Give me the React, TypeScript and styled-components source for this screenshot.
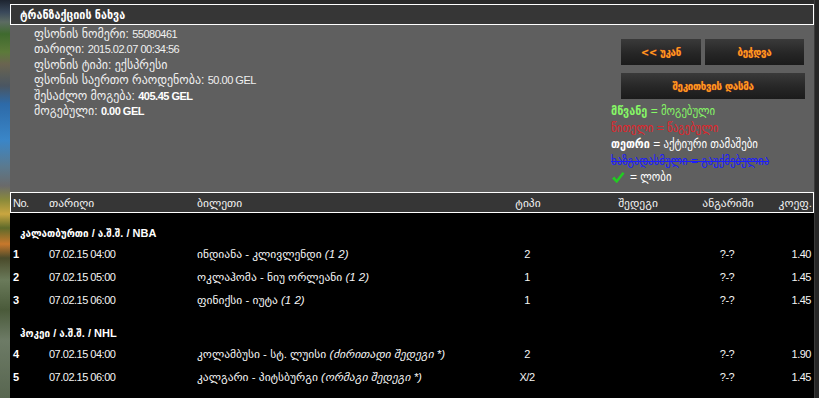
import React from "react";
import styled, { createGlobalStyle } from "styled-components";

const GlobalStyle = createGlobalStyle`
  html, body { margin: 0; padding: 0; background: #000; }
  body {
    font-family: "Liberation Sans", "DejaVu Sans", sans-serif;
    font-size: 12px;
    color: #fff;
  }
  * { box-sizing: border-box; }
`;

const Page = styled.div`
  display: flex;
  width: 819px;
  height: 398px;
  overflow: hidden;
`;

const LeftStrip = styled.div`
  width: 10px;
  flex: none;
  background: linear-gradient(
    180deg,
    #1d2430 0px,
    #39485a 12px,
    #5c6b62 22px,
    #3f6a2e 34px,
    #5c7a3a 52px,
    #6a6450 64px,
    #4a5662 86px,
    #2d6aa8 104px,
    #3a86c8 140px,
    #5a7a90 166px,
    #6a6a6a 186px,
    #8a8a3a 200px,
    #c9a640 214px,
    #5e6a2a 228px,
    #c8782c 244px,
    #4a4a2a 258px,
    #6a7a5a 280px,
    #4a5a3a 310px,
    #6d7b66 340px,
    #586650 398px
  );
`;

const RightStrip = styled.div`
  width: 5px;
  flex: none;
  background: #262626;
  border-left: 1px solid #3a3a3a;
`;

const Main = styled.div`
  width: 804px;
  flex: none;
  display: flex;
  flex-direction: column;
  background: #000;
  padding-top: 4px;
  background-image: linear-gradient(#2a2a2a, #2a2a2a);
  background-size: 100% 4px;
  background-repeat: no-repeat;
`;

const TitleBar = styled.div`
  height: 21px;
  border: 1px solid #fff;
  background: #363636;
  display: flex;
  align-items: center;
  padding-left: 9px;
  font-family: "Liberation Sans", "DejaVu Sans Condensed", sans-serif;
  font-weight: bold;
  font-size: 12px;
`;

const InfoPanel = styled.div`
  height: 167px;
  background: #5f5f5f;
  display: flex;
  justify-content: space-between;
`;

const InfoList = styled.div`
  padding: 2px 0 0 24px;
  display: flex;
  flex-direction: column;
`;

const InfoLine = styled.div`
  line-height: 15.4px;
  color: #f0f0f0;
`;

const Num = styled.span<{ $bold?: boolean }>`
  font-family: "Liberation Sans", sans-serif;
  font-size: 11px;
  letter-spacing: -0.5px;
  font-weight: ${(p) => (p.$bold ? "bold" : "normal")};
  color: ${(p) => (p.$bold ? "#fff" : "inherit")};
`;

const SideCol = styled.div`
  width: 194px;
  margin-right: 9px;
  padding-top: 14px;
  display: flex;
  flex-direction: column;
`;

const ButtonRow = styled.div`
  display: flex;
  gap: 4px;
  margin-left: 10px;
  & + & {
    margin-top: 8px;
  }
`;

const Button = styled.button<{ $w: number }>`
  width: ${(p) => p.$w}px;
  height: 26px;
  border: none;
  padding: 0;
  background: linear-gradient(180deg, #3a3a3a 0%, #262626 55%, #1b1b1b 100%);
  color: #ff9c1a;
  font-family: "DejaVu Sans", sans-serif;
  font-weight: bold;
  font-size: 9.8px;
  letter-spacing: -0.3px;
  cursor: pointer;
  text-shadow: 0 0 1px #b33;
`;

const Legend = styled.div`
  margin-top: 4px;
  display: flex;
  flex-direction: column;
`;

const LegendLine = styled.div<{ $color: string; $strike?: boolean }>`
  line-height: 16.5px;
  font-size: 12px;
  font-family: "Liberation Sans", "DejaVu Sans Condensed", sans-serif;
  color: ${(p) => p.$color};
  text-decoration: ${(p) => (p.$strike ? "line-through" : "none")};
  display: flex;
  align-items: center;
  gap: 5px;
  white-space: nowrap;
`;

const COLS = "36px 148px 278px 110px 110px 70px 52px";

const HeadRow = styled.div`
  display: grid;
  grid-template-columns: ${COLS};
  height: 21px;
  border: 1px solid #fff;
  background: #363636;
  align-items: center;
`;

const Cell = styled.div<{ $align?: "left" | "center" | "right" }>`
  text-align: ${(p) => p.$align || "left"};
  padding: ${(p) => (p.$align === "right" ? "0 3px 0 0" : p.$align === "center" ? "0" : "0 0 0 3px")};
  white-space: nowrap;
`;

const HeadCell = styled(Cell)`
  padding-left: ${(p) => (p.$align ? "0" : "2px")};
  padding-right: ${(p) => (p.$align === "right" ? "3px" : "0")};
  color: #f2f2f2;
  font-size: 11.5px;
`;

const Body = styled.div`
  flex: 1;
  background: #000;
  padding-top: 11px;
`;

const Group = styled.div`
  & + & {
    margin-top: 13px;
  }
`;

const GroupTitle = styled.div`
  height: 18px;
  line-height: 18px;
  padding-left: 10px;
  font-family: "Liberation Sans", "DejaVu Sans Condensed", sans-serif;
  font-size: 11px;
  font-weight: bold;
`;

const Row = styled.div`
  display: grid;
  grid-template-columns: ${COLS};
  height: 23px;
  align-items: center;
  color: #f5f5f5;
  font-size: 11.5px;
`;

const Note = styled.i`
  font-style: italic;
`;

const Check = () => (
  <svg width="14" height="13" viewBox="0 0 14 13">
    <path d="M1 7.5 L3.5 5.5 L5.5 8.5 L11.5 1 L13.5 2.5 L5.8 12.3 Z" fill="#22cc22" />
  </svg>
);

type Bet = { no: number; date: string; event: string; note: string; type: string; odds: string };

const groups: { title: string; rows: Bet[] }[] = [
  {
    title: "კალათბურთი / ა.შ.შ. / NBA",
    rows: [
      { no: 1, date: "07.02.15 04:00", event: "ინდიანა - კლივლენდი", note: "(1 2)", type: "2", odds: "1.40" },
      { no: 2, date: "07.02.15 05:00", event: "ოკლაჰომა - ნიუ ორლეანი", note: "(1 2)", type: "1", odds: "1.45" },
      { no: 3, date: "07.02.15 06:00", event: "ფინიქსი - იუტა", note: "(1 2)", type: "1", odds: "1.45" },
    ],
  },
  {
    title: "ჰოკეი / ა.შ.შ. / NHL",
    rows: [
      { no: 4, date: "07.02.15 04:00", event: "კოლამბუსი - სტ. ლუისი", note: "(ძირითადი შედეგი *)", type: "2", odds: "1.90" },
      { no: 5, date: "07.02.15 06:00", event: "კალგარი - პიტსბურგი", note: "(ორმაგი შედეგი *)", type: "X/2", odds: "1.45" },
    ],
  },
];

export default function App() {
  return (
    <>
      <GlobalStyle />
      <Page>
        <LeftStrip />
        <Main>
          <TitleBar>ტრანზაქციის ნახვა</TitleBar>
          <InfoPanel>
            <InfoList>
              <InfoLine>
                ფსონის ნომერი: <Num>55080461</Num>
              </InfoLine>
              <InfoLine>
                თარიღი: <Num>2015.02.07 00:34:56</Num>
              </InfoLine>
              <InfoLine>ფსონის ტიპი: ექსპრესი</InfoLine>
              <InfoLine>
                ფსონის საერთო რაოდენობა: <Num>50.00 GEL</Num>
              </InfoLine>
              <InfoLine>
                შესაძლო მოგება: <Num $bold>405.45 GEL</Num>
              </InfoLine>
              <InfoLine>
                მოგებული: <Num $bold>0.00 GEL</Num>
              </InfoLine>
            </InfoList>
            <SideCol>
              <ButtonRow>
                <Button $w={80}>&lt;&lt; უკან</Button>
                <Button $w={99}>ბეჭდვა</Button>
              </ButtonRow>
              <ButtonRow>
                <Button $w={184}>შეკითხვის დასმა</Button>
              </ButtonRow>
              <Legend>
                <LegendLine $color="#86f766">
                  <span>
                    <b>მწვანე</b> = მოგებული
                  </span>
                </LegendLine>
                <LegendLine $color="#e0252b">
                  <span>წითელი = წაგებული</span>
                </LegendLine>
                <LegendLine $color="#ffffff">
                  <span>
                    <b>თეთრი</b> = აქტიური თამაშები
                  </span>
                </LegendLine>
                <LegendLine $color="#1c1cff" $strike>
                  <span>ხაზგადასმული = გაუქმებულია</span>
                </LegendLine>
                <LegendLine $color="#ffffff">
                  <Check />
                  <span>= ლობი</span>
                </LegendLine>
              </Legend>
            </SideCol>
          </InfoPanel>
          <HeadRow>
            <HeadCell>
              <Num>No.</Num>
            </HeadCell>
            <HeadCell>თარიღი</HeadCell>
            <HeadCell>ბილეთი</HeadCell>
            <HeadCell $align="center">ტიპი</HeadCell>
            <HeadCell $align="center">შედეგი</HeadCell>
            <HeadCell $align="center">ანგარიში</HeadCell>
            <HeadCell $align="right">კოეფ.</HeadCell>
          </HeadRow>
          <Body>
            {groups.map((g) => (
              <Group key={g.title}>
                <GroupTitle>{g.title}</GroupTitle>
                {g.rows.map((r) => (
                  <Row key={r.no}>
                    <Cell>
                      <Num $bold>{r.no}</Num>
                    </Cell>
                    <Cell>
                      <Num>{r.date}</Num>
                    </Cell>
                    <Cell>
                      {r.event} <Note>{r.note}</Note>
                    </Cell>
                    <Cell $align="center">
                      <Num>{r.type}</Num>
                    </Cell>
                    <Cell $align="center"></Cell>
                    <Cell $align="center">
                      <Num>?-?</Num>
                    </Cell>
                    <Cell $align="right">
                      <Num>{r.odds}</Num>
                    </Cell>
                  </Row>
                ))}
              </Group>
            ))}
          </Body>
        </Main>
        <RightStrip />
      </Page>
    </>
  );
}
